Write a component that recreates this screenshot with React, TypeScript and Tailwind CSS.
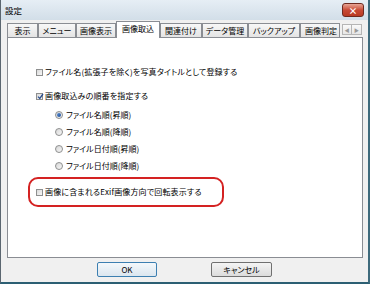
import React from 'react';

function CheckBox({ checked = false }: { checked?: boolean }) {
  return (
    <span className="relative flex h-[7px] w-[7px] shrink-0 items-center justify-center border border-[#8e8f8f] bg-gradient-to-br from-[#d9d9d9] to-[#f7f7f7]">
      {checked && (
        <svg viewBox="0 0 7 7" className="absolute -top-[1px] left-0 h-[7px] w-[7px]">
          <path d="M1 3.6 L2.8 5.4 L6 1" fill="none" stroke="#2b4f8f" strokeWidth="1.3" />
        </svg>
      )}
    </span>
  );
}

function Radio({ checked = false }: { checked?: boolean }) {
  return (
    <span className="flex h-[8px] w-[8px] shrink-0 items-center justify-center rounded-full border border-[#8e8f8f] bg-gradient-to-br from-[#d6d6d6] to-[#f8f8f8]">
      {checked && <span className="h-[4px] w-[4px] rounded-full bg-gradient-to-br from-[#5d8fd0] to-[#1c4e9a]" />}
    </span>
  );
}

function Tab({ label, className }: { label: string; className: string }) {
  return (
    <div
      className={`flex h-[14px] items-center justify-center border border-b-0 border-[#8a8d93] bg-gradient-to-b from-[#f7f7f7] to-[#e4e4e4] text-[8px] leading-none text-black ${className}`}
    >
      {label}
    </div>
  );
}

export default function App() {
  return (
    <div className="flex h-[284px] w-[370px] flex-col overflow-hidden border-r-2 border-b-2 border-l border-r-[#3e6a7c] border-b-[#2c5f73] border-l-[#5b6670] bg-[#f0f0f0] font-['Noto_Sans_CJK_JP',sans-serif] [font-feature-settings:'palt']">
      {/* Title bar */}
      <div className="flex h-[20px] shrink-0 items-center justify-between bg-gradient-to-b from-[#e6eef5] to-[#d2dee8] pl-[4px] pr-[4px]">
        <span className="text-[8.5px] leading-none text-black">設定</span>
        <div className="flex h-[14px] w-[22px] items-center justify-center rounded-[3px] border border-[#6e2a20] bg-gradient-to-b from-[#e7a596] via-[#c84a36] to-[#b93a22]">
          <span className="text-[9px] font-bold leading-none text-white">×</span>
        </div>
      </div>

      {/* Tabs */}
      <div className="mt-[1px] flex h-[16px] shrink-0 items-end pl-[6px]">
        <Tab label="表示" className="w-[31px]" />
        <Tab label="メニュー" className="w-[38px]" />
        <Tab label="画像表示" className="w-[40px]" />
        <div className="relative z-10 -mb-px flex h-[17px] w-[44px] items-center justify-center border border-b-0 border-[#8a8d93] bg-white pb-[2px] text-[8px] leading-none text-black">
          画像取込
        </div>
        <Tab label="関連付け" className="w-[42px]" />
        <Tab label="データ管理" className="w-[46px]" />
        <Tab label="バックアップ" className="w-[52px]" />
        <Tab label="画像判定" className="w-[40px] justify-start overflow-hidden whitespace-nowrap pl-[4px]" />
        <div className="mb-[2px] ml-[2px] flex h-[11px]">
          <div className="flex w-[10px] items-center justify-center border border-[#b5b5b5] bg-gradient-to-b from-[#fafafa] to-[#e6e6e6] text-[5px] leading-none text-[#9a9a9a]">◀</div>
          <div className="flex w-[10px] items-center justify-center border border-l-0 border-[#b5b5b5] bg-gradient-to-b from-[#fafafa] to-[#e6e6e6] text-[5px] leading-none text-[#9a9a9a]">▶</div>
        </div>
      </div>

      {/* Panel */}
      <div className="ml-[6px] flex h-[221px] w-[356px] shrink-0 flex-col border border-[#8a8d93] bg-white pl-[20px] pt-[26px] text-[8px] leading-none text-black">
        <div className="flex h-[16px] items-center gap-[2px] pl-[8px]">
          <CheckBox />
          <span className="tracking-[0.15px]">ファイル名(拡張子を除く)を写真タイトルとして登録する</span>
        </div>
        <div className="mt-[8px] flex h-[16px] items-center gap-[2px] pl-[8px]">
          <CheckBox checked />
          <span className="tracking-[0.15px]">画像取込みの順番を指定する</span>
        </div>
        <div className="mt-[2px] flex flex-col pl-[27px]">
          <div className="flex h-[17px] items-center gap-[3px]">
            <Radio checked />
            <span>ファイル名順(昇順)</span>
          </div>
          <div className="flex h-[17px] items-center gap-[3px]">
            <Radio />
            <span>ファイル名順(降順)</span>
          </div>
          <div className="flex h-[17px] items-center gap-[3px]">
            <Radio />
            <span>ファイル日付順(昇順)</span>
          </div>
          <div className="flex h-[17px] items-center gap-[3px]">
            <Radio />
            <span>ファイル日付順(降順)</span>
          </div>
        </div>
        <div className="mt-[3px] flex h-[30px] w-[196px] items-center gap-[2px] rounded-[10px] border-2 border-[#d42222] pl-[6px]">
          <CheckBox />
          <span className="tracking-[0.15px]">画像に含まれるExif画像方向で回転表示する</span>
        </div>
      </div>

      {/* Buttons */}
      <div className="mt-[4px] flex justify-center gap-[54px]">
        <button className="flex h-[15px] w-[60px] items-center justify-center rounded-[2px] border border-[#3c7fb1] bg-gradient-to-b from-[#f4f8fb] to-[#dbe6ef] text-[8px] leading-none text-black">
          OK
        </button>
        <button className="flex h-[15px] w-[61px] items-center justify-center rounded-[2px] border border-[#707070] bg-gradient-to-b from-[#f4f4f4] to-[#dcdcdc] text-[8px] leading-none text-black">
          キャンセル
        </button>
      </div>
    </div>
  );
}
